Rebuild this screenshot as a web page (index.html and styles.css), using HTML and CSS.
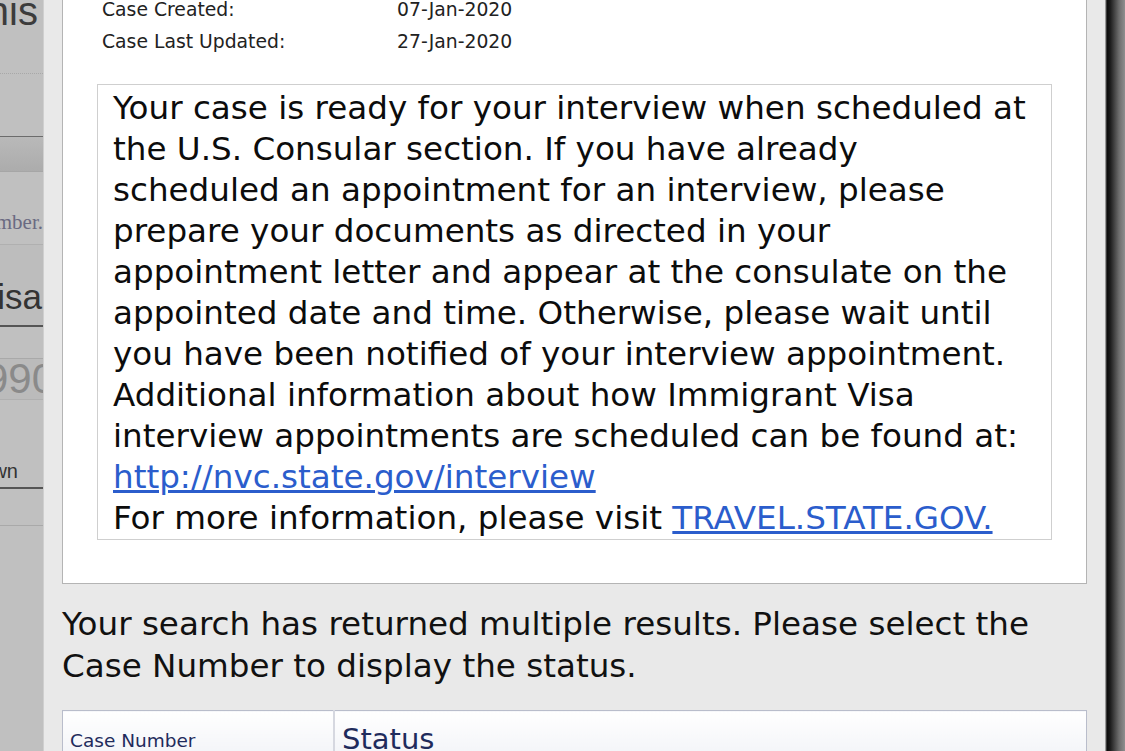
FILE: index.html
```html
<!DOCTYPE html>
<html lang="en">
<head>
  <meta charset="UTF-8" />
  <title>Visa Status Check</title>
  <link rel="stylesheet" href="styles.css">
</head>
<body>

  <!-- pagina por tras do modal -->
  <div class="page-behind">
    <div class="pb-row pb-title"><span>Adminis</span></div>
    <div class="pb-row pb-dotted"></div>
    <div class="pb-row pb-bar"></div>
    <div class="pb-row pb-hint"><span>Case Number.</span></div>
    <div class="pb-row pb-select"><span>Immigrant Visa</span></div>
    <div class="pb-row pb-gap"></div>
    <div class="pb-row pb-input"><span>NVC2019990</span></div>
    <div class="pb-row pb-small"><span>Unknown</span></div>
    <div class="pb-row pb-gap2"></div>
    <div class="pb-row pb-rest"></div>
  </div>

  <div class="dialog">
    <div class="panel">
      <div class="info-row">
        <span class="info-label">Case Created:</span>
        <span>07-Jan-2020</span>
      </div>
      <div class="info-row">
        <span class="info-label">Case Last Updated:</span>
        <span>27-Jan-2020</span>
      </div>

      <div class="message">
        Your case is ready for your interview when scheduled at the U.S. Consular section. If you have already scheduled an appointment for an interview, please prepare your documents as directed in your appointment letter and appear at the consulate on the appointed date and time. Otherwise, please wait until you have been notified of your interview appointment. Additional information about how Immigrant Visa interview appointments are scheduled can be found at:
        <br><a href="#">http://nvc.state.gov/interview</a>
        <br>For more information, please visit <a href="#">TRAVEL.STATE.GOV.</a>
      </div>
    </div>

    <p class="multi">Your search has returned multiple results. Please select the Case Number to display the status.</p>

    <table class="results">
      <tr>
        <th class="col-case">Case Number</th>
        <th class="col-status">Status</th>
      </tr>
    </table>
  </div>

  <div class="shadow"></div>

</body>
</html>
```

FILE: styles.css
```css
html, body {
  margin: 0;
  height: 100%;
}
body {
  display: flex;
  overflow: hidden;
  font-family: "DejaVu Sans", Verdana, sans-serif;
  color: #111;
  background-color: #c0c0c0;
}

/* pagina escurecida atras do dialogo */
.page-behind {
  width: 43px;
  flex-shrink: 0;
  overflow: hidden;
  background-color: #c0c0c0;
  border-right: 1px solid #cfcfcf;
  display: flex;
  flex-direction: column;
  font-family: "Liberation Sans", Arial, sans-serif;
}
.pb-row {
  display: flex;
  justify-content: flex-end;
  white-space: nowrap;
  box-sizing: border-box;
}
.pb-title {
  height: 60px;
  align-items: flex-start;
  font-size: 40px;
  line-height: 30px;
  color: #3c3c3c;
  margin-top: -4px;
  padding-right: 5px;
}
.pb-dotted {
  height: 83px;
  border-top: 1px dotted #a8a8a8;
  margin-top: 17px;
}
.pb-bar {
  height: 36px;
  border-top: 1px solid #6c6c6c;
  border-bottom: 1px solid #a6a6a6;
  background: linear-gradient(#b9b9b9, #acacac);
  margin-top: -20px;
}
.pb-hint {
  height: 73px;
  align-items: center;
  font-family: "Liberation Serif", serif;
  font-size: 21px;
  color: #6a6a82;
  border-bottom: 1px solid #b0b0b0;
  padding-top: 28px;
}
.pb-select {
  height: 82px;
  align-items: flex-end;
  font-size: 35px;
  color: #333;
  background-color: #bdbdbd;
  border-bottom: 2px solid #555;
  padding-bottom: 8px;
  padding-right: 1px;
}
.pb-gap {
  height: 32px;
  border-bottom: 1px solid #a9a9a9;
}
.pb-input {
  height: 41px;
  align-items: center;
  font-size: 42px;
  color: #8a8a8a;
  background-color: #bbbbbb;
  border-bottom: 1px solid #b0b0b0;
  margin-right: -12px;
}
.pb-small {
  height: 89px;
  align-items: flex-end;
  font-size: 20px;
  color: #333;
  border-bottom: 2px solid #555;
  padding-bottom: 4px;
  padding-right: 25px;
}
.pb-gap2 {
  height: 37px;
  border-bottom: 1px solid #a9a9a9;
}
.pb-rest {
  flex: 1;
}

/* dialogo */
.dialog {
  width: 1061px;
  flex-shrink: 0;
  background-color: #e9e9e9;
  padding: 0 18px;
  box-sizing: border-box;
}
.panel {
  background-color: white;
  border: 1px solid #b4b4b4;
  border-top: none;
  margin-top: -6px;
  padding: 0 34px 43px 34px;
}
.info-row {
  display: flex;
  font-size: 18.8px;
  line-height: 32px;
  color: #222;
  padding-left: 5px;
}
.info-label {
  width: 295px;
}
.message {
  margin-top: 26px;
  border: 1px solid #cfcfcf;
  padding: 3px 21px 0 15px;
  font-size: 32.6px;
  line-height: 41px;
  color: #0c0c0c;
}
.message a {
  color: #2b5dcc;
}

.multi {
  margin: 19px 0 23px 0;
  font-size: 32.6px;
  line-height: 42px;
  color: #111;
}

.results {
  width: 100%;
  border-collapse: collapse;
  border: 1px solid #b9bdcb;
}
.results th {
  text-align: left;
  font-weight: normal;
  color: #1f2b5c;
  background: linear-gradient(#ffffff, #eef0f5);
  vertical-align: top;
  height: 41px;
  padding: 0 7px;
}
.col-case {
  width: 256px;
  font-size: 18.5px;
  line-height: 22px;
  border-right: 2px solid #d6d8e0;
  padding-top: 19px !important;
}
.col-status {
  font-size: 29px;
  line-height: 34px;
  padding-top: 11px !important;
}

.shadow {
  flex: 1;
  background: linear-gradient(to right, #c9c9c9 0, #0a0a0a 2px, #1a1a1a 5px, #6d6d6d 14px, #8f8f8f 20px);
}
```
